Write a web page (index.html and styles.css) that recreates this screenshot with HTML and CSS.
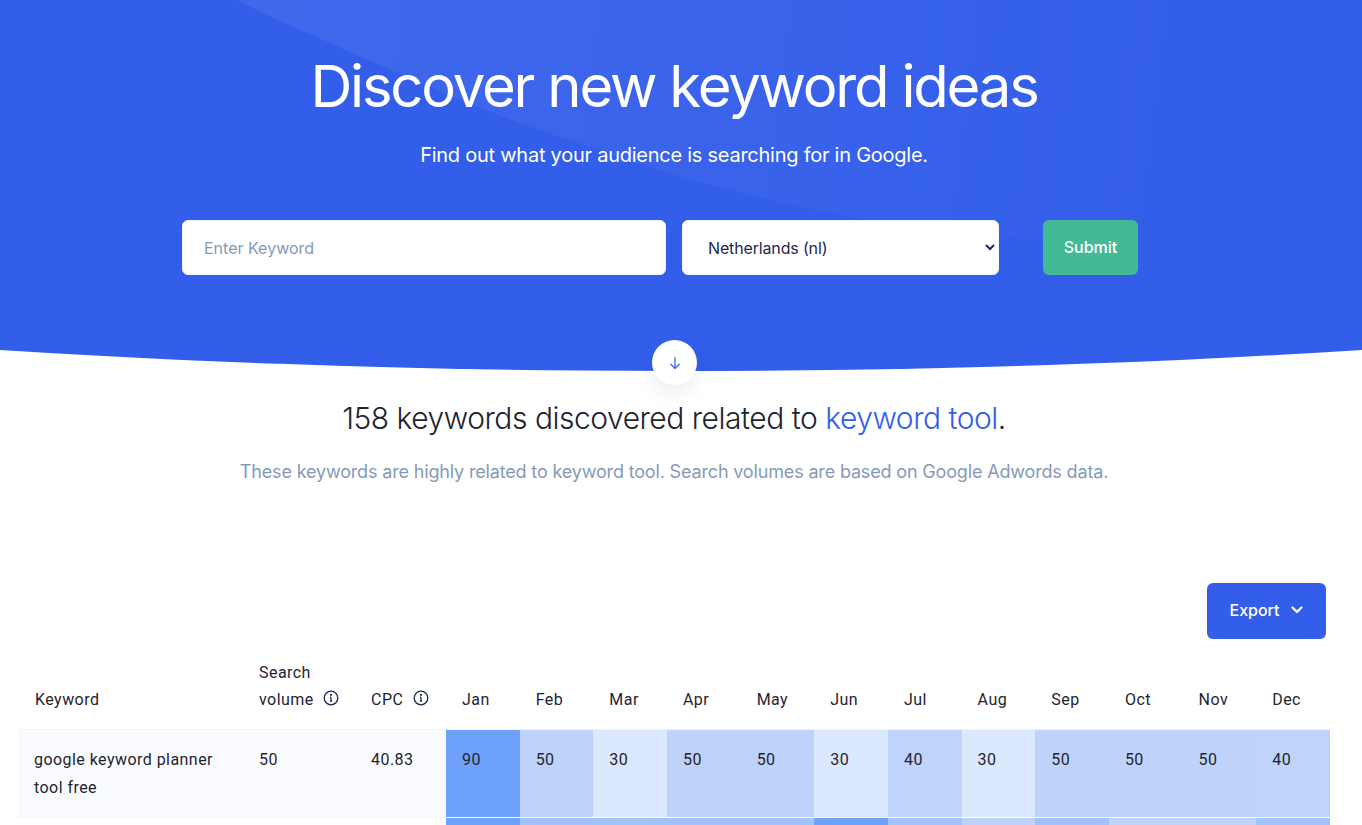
FILE: index.html
```html
<!DOCTYPE html>
<html lang="en">
<head>
<meta charset="utf-8">
<title>Discover new keyword ideas</title>
<link rel="stylesheet" href="styles.css">
</head>
<body>
<section class="hero">
  <div class="hero-bg">
    <svg class="hero-light" viewBox="0 0 1362 372" aria-hidden="true"><defs><linearGradient id="lg" gradientUnits="userSpaceOnUse" x1="237" y1="0" x2="1200" y2="120"><stop offset="0" stop-color="#fff" stop-opacity=".065"/><stop offset="1" stop-color="#fff" stop-opacity="0"/></linearGradient></defs><path d="M237 0C280 22 320 38 357 55C395 72 430 87 469 103C505 118 535 129 570 140C615 155 655 170 700 182C750 195 800 208 852 217C1000 240 1200 250 1362 250V0Z" fill="url(#lg)"/></svg>
  </div>
  <h1 class="hero-title">Discover new keyword ideas</h1>
  <p class="hero-sub">Find out what your audience is searching for in Google.</p>
  <form class="search">
    <input class="field field-keyword" type="text" placeholder="Enter Keyword">
    <select class="field field-country"><option>Netherlands (nl)</option></select>
    <button class="submit" type="button">Submit</button>
  </form>
  <span class="scroll-btn"><svg width="14" height="14" viewBox="0 0 14 14" fill="none" stroke="#3b6cf5" stroke-width="1.3" stroke-linecap="round" stroke-linejoin="round"><path d="M7 1.5v11M2.8 8.3 7 12.5l4.2-4.2"/></svg></span>
</section>
<section class="results">
  <h2 class="results-title">158 keywords discovered related to <span class="accent">keyword tool</span>.</h2>
  <p class="results-sub">These keywords are highly related to keyword tool. Search volumes are based on Google Adwords data.</p>
</section>
<div class="toolbar">
  <button class="export" type="button">Export <svg width="12" height="8" viewBox="0 0 12 8" fill="none" stroke="#fff" stroke-width="2.2" stroke-linecap="round" stroke-linejoin="round"><path d="M1.5 1.5 6 6l4.5-4.5"/></svg></button>
</div>
<table class="kw">
  <colgroup><col class="c-kw"><col class="c-vol"><col class="c-cpc"><col class="c-m"><col class="c-m"><col class="c-m"><col class="c-m"><col class="c-m"><col class="c-m"><col class="c-m"><col class="c-m"><col class="c-m"><col class="c-m"><col class="c-m"><col class="c-m"></colgroup>
  <thead>
    <tr>
      <th class="th-first">Keyword</th>
      <th>Search<br>volume <svg class="info" viewBox="0 0 16 16" fill="none" stroke="#1b2a4e" stroke-width="1.3"><circle cx="8" cy="8" r="6.8"/><path d="M8 7.2v4M6.8 11.2h2.4M6.9 7.2H8"/><circle cx="8" cy="4.8" r=".5" fill="#1b2a4e"/></svg></th>
      <th>CPC <svg class="info" viewBox="0 0 16 16" fill="none" stroke="#1b2a4e" stroke-width="1.3"><circle cx="8" cy="8" r="6.8"/><path d="M8 7.2v4M6.8 11.2h2.4M6.9 7.2H8"/><circle cx="8" cy="4.8" r=".5" fill="#1b2a4e"/></svg></th>
      <th>Jan</th><th>Feb</th><th>Mar</th><th>Apr</th><th>May</th><th>Jun</th><th>Jul</th><th>Aug</th><th>Sep</th><th>Oct</th><th>Nov</th><th>Dec</th>
    </tr>
  </thead>
  <tbody>
    <tr class="row-1">
      <td>google keyword planner tool free</td><td>50</td><td>40.83</td>
      <td class="h90">90</td><td class="h50">50</td><td class="h30">30</td><td class="h50">50</td><td class="h50">50</td><td class="h30">30</td><td class="h40">40</td><td class="h30">30</td><td class="h50">50</td><td class="h50">50</td><td class="h50">50</td><td class="h40">40</td>
    </tr>
    <tr class="row-2">
      <td></td><td></td><td></td>
      <td class="h90"></td><td class="h70"></td><td class="h70"></td><td class="h70"></td><td class="h70"></td><td class="h90"></td><td class="h70"></td><td class="h50"></td><td class="h70"></td><td class="h50"></td><td class="h50"></td><td class="h70"></td>
    </tr>
  </tbody>
</table>
</body>
</html>
```
FILE: styles.css
```css
* { box-sizing: border-box; }
html, body { margin: 0; height: 825px; overflow: hidden; }
body { background: #fff; font-family: "Inter", "Liberation Sans", sans-serif; color: #1f2430; }

.hero {
  position: relative;
  height: 371px;
  padding-top: 51px;
  text-align: center;
  color: #fff;
}
.hero-bg {
  position: absolute; inset: 0;
  background: #335eea;
  clip-path: ellipse(2053px 371px at 50% 0);
}
.hero-light { position: absolute; left: 0; top: 0; width: 1362px; height: 372px; }
.hero-title { position: relative; margin: 0; padding-right: 14px; font-size: 58px; line-height: 70px; font-weight: 400; letter-spacing: -2.2px; font-family: "Inter", sans-serif; }
.hero-sub { position: relative; margin: 20px 0 0; padding-right: 14px; font-size: 20px; line-height: 28px; letter-spacing: -.25px; font-family: "Inter", sans-serif; }

.search { position: relative; display: flex; margin: 51px 0 0 182px; }
.field { height: 55px; border: 1px solid #f1f4f8; border-radius: 6px; background: #fff; font: 16px "Inter", sans-serif; color: #1b2a4e; }
.field-keyword { width: 484px; padding: 0 21px; }
.field-keyword::placeholder { color: #869ab8; opacity: 1; }
.field-country { width: 317px; margin-left: 16px; padding: 0 21px; letter-spacing: -.15px; }
.submit { width: 95px; height: 55px; margin-left: 44px; border: 0; border-radius: 6px; background: #42ba96; color: #fff; font: 500 16px "Inter", sans-serif; padding-bottom: 2px; }

.scroll-btn {
  position: absolute; left: 652px; top: 340px; width: 45px; height: 45px;
  display: flex; align-items: center; justify-content: center;
  border-radius: 50%; background: #fff;
  box-shadow: 0 8px 20px rgba(27, 42, 78, .08);
}
.results { text-align: center; padding-right: 14px; }
.results-title { margin: 27px 0 0; font-size: 30px; line-height: 40px; font-weight: 300; letter-spacing: -.48px; font-family: "Inter", sans-serif; color: #1f2430; }
.accent { color: #335eea; }
.results-sub { margin: 21px 0 0; font-size: 18px; line-height: 26px; letter-spacing: -.16px; color: #869ab8; font-family: "Inter", sans-serif; }

.toolbar { display: flex; justify-content: flex-end; padding: 98px 36px 0 0; }
.export { display: flex; align-items: center; justify-content: center; gap: 11px; width: 119px; height: 56px; border: 0; border-radius: 6px; background: #335eea; color: #fff; font: 500 16px "Inter", sans-serif; padding: 0 1px 3px 0; }

.kw { width: 1312px; margin: 19px 0 0 18px; table-layout: fixed; border-collapse: separate; border-spacing: 0; font-family: "Roboto", sans-serif; font-size: 16px; letter-spacing: .45px; line-height: 28px; color: #1f2430; }
.c-kw { width: 225px; } .c-vol { width: 112px; } .c-cpc { width: 91px; } .c-m { width: 73.67px; }
.kw th { height: 71px; padding: 0 0 16px 16px; line-height: 27px; white-space: nowrap; text-align: left; vertical-align: bottom; font-weight: 400; }
.kw .th-first { padding-left: 17px; }
.info { width: 16px; height: 16px; margin-left: 5px; vertical-align: -1px; }
.kw td { padding: 16px 16px 14px; vertical-align: top; }
.row-1 td { height: 89px; border-top: 1px solid #f1f4f8; border-bottom: 1px solid #fff; }
.row-1 td:nth-child(-n+3) { background: #f9fbfe; border-bottom-color: #f1f4f8; }
.row-2 td { height: 60px; }
.h30 { background: #dce8fe; }
.h40 { background: #bfd3fb; }
.h50 { background: #bfd3fa; }
.h70 { background: #a0c3fc; }
.h90 { background: #6ea2fa; }
```
